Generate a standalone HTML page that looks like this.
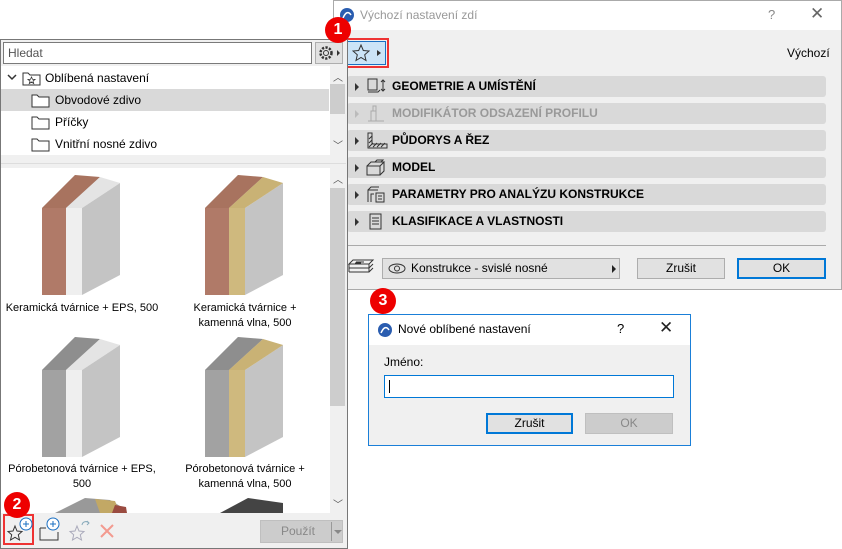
<!DOCTYPE html>
<html><head><meta charset="utf-8"><style>
*{box-sizing:border-box;margin:0;padding:0}
body{width:842px;height:549px;background:#fff;position:relative;overflow:hidden;font-family:"Liberation Sans",sans-serif;font-size:12px;color:#000}
.a{position:absolute}
.sec{position:absolute;left:347px;width:479px;height:21px;background:#d9d9d9;border-radius:3px;font-weight:bold;font-size:12px;line-height:21px}
.sec .t{position:absolute;left:45px}
.sec svg{position:absolute}
.sec .tri{position:absolute;left:8px;top:7px;width:0;height:0;border-left:4px solid #333;border-top:4px solid transparent;border-bottom:4px solid transparent}
.btn{position:absolute;background:#e1e1e1;border:1px solid #adadad;text-align:center;font-size:12px}
.badge{position:absolute;width:26px;height:26px;border-radius:50%;background:#e00;color:#fff;font-weight:bold;font-size:16px;text-align:center;line-height:26px}
.lbl{position:absolute;width:160px;text-align:center;font-size:11px;line-height:15px}
</style></head><body>

<!-- right dialog -->
<div class="a" style="left:333px;top:0;width:509px;height:290px;background:#f0f0f0;border:1px solid #aaa"></div>
<div class="a" style="left:334px;top:1px;width:507px;height:29px;background:#fff"></div>
<svg class="a" style="left:339px;top:7px" width="16" height="16"><circle cx="8" cy="8" r="7" fill="#2a5db0"/><path d="M4 11 Q8 2 12 8" stroke="#fff" stroke-width="1.5" fill="none"/></svg>
<div class="a" style="left:360px;top:8px;color:#999;font-size:12px">Výchozí nastavení zdí</div>
<div class="a" style="left:768px;top:7px;color:#888;font-size:13px">?</div>
<div class="a" style="left:810px;top:4px;color:#666;font-size:17px">✕</div>
<div class="a" style="left:343px;top:38px;width:46px;height:30px;border:2px solid #e33"></div>
<div class="a" style="left:346px;top:41px;width:40px;height:24px;background:#cce4f7;border:1px solid #1a6fc2"></div>
<svg class="a" style="left:352px;top:44px" width="30" height="18"><path d="M9 1 L11.3 6.5 L17 7 L12.7 10.8 L14 16.5 L9 13.5 L4 16.5 L5.3 10.8 L1 7 L6.7 6.5 Z" fill="none" stroke="#333" stroke-width="1"/><path d="M25 6 L29 9 L25 12Z" fill="#333"/></svg>
<div class="a" style="left:787px;top:46px;font-size:12px">Výchozí</div>

<div class="sec" style="top:76px"><i class="tri"></i><svg style="left:20px;top:2px" width="20" height="17"><rect x="1" y="1" width="9" height="11" fill="none" stroke="#333"/><path d="M1 14 L11 14 L13 12" stroke="#333" fill="none"/><path d="M16 2 V13 M14 4 L16 2 L18 4 M14 11 L16 13 L18 11" stroke="#333" fill="none"/></svg><span class="t">GEOMETRIE A UMÍSTĚNÍ</span></div>
<div class="sec" style="top:103px;color:#999"><i class="tri" style="border-left-color:#bbb"></i><svg style="left:19px;top:2px" width="20" height="17"><path d="M2 16 H18 M5 16 V6 H10 V16 M7 6 V1 H10 V6" stroke="#aaa" fill="none"/></svg><span class="t">MODIFIKÁTOR ODSAZENÍ PROFILU</span></div>
<div class="sec" style="top:130px"><i class="tri"></i><svg style="left:19px;top:2px" width="22" height="17"><path d="M2 1 V16 H21 V12 H6 V1 Z" fill="none" stroke="#333"/><path d="M3 15 L7 11 M7 15 L11 11 M11 15 L15 11 M15 15 L19 11 M3 11 L6 8 M3 7 L6 4" stroke="#333"/></svg><span class="t">PŮDORYS A ŘEZ</span></div>
<div class="sec" style="top:157px"><i class="tri"></i><svg style="left:19px;top:2px" width="22" height="17"><path d="M1 7 H14 V16 H1 Z M1 7 L5 3 H18 L14 7 M18 3 V12 L14 16 M9 3 L11 1 H17 L15 3" fill="none" stroke="#333"/></svg><span class="t">MODEL</span></div>
<div class="sec" style="top:184px"><i class="tri"></i><svg style="left:19px;top:2px" width="22" height="17"><path d="M2 16 V4 H12 M5 16 V8 H8 M2 4 L5 1 H13" fill="none" stroke="#333"/><rect x="10" y="7" width="8" height="9" fill="none" stroke="#333"/><path d="M12 10 H16 M12 13 H16" stroke="#333"/></svg><span class="t">PARAMETRY PRO ANALÝZU KONSTRUKCE</span></div>
<div class="sec" style="top:211px"><i class="tri"></i><svg style="left:21px;top:2px" width="16" height="17"><rect x="2" y="1" width="11" height="15" fill="none" stroke="#333"/><path d="M4 5 H11 M4 8 H11 M4 11 H11" stroke="#333"/></svg><span class="t">KLASIFIKACE A VLASTNOSTI</span></div>
<div class="a" style="left:347px;top:245px;width:479px;height:1px;background:#aaa"></div>
<svg class="a" style="left:347px;top:258px" width="28" height="22"><path d="M2 6 H22 L26 2 H6 Z M2 10 H22 L26 6 M2 14 H22 L26 10 M2 6 V14 M22 6 V14" fill="none" stroke="#333"/><path d="M9 4 H17 M8 5 H14" stroke="#333"/></svg>
<div class="btn" style="left:382px;top:258px;width:238px;height:21px;text-align:left;padding-left:28px;line-height:19px">Konstrukce - svislé nosné</div>
<svg class="a" style="left:388px;top:263px" width="18" height="11"><ellipse cx="9" cy="5.5" rx="8" ry="4.5" fill="none" stroke="#333"/><circle cx="9" cy="5.5" r="2.5" fill="none" stroke="#333"/></svg>
<div class="a" style="left:612px;top:265px;border-left:4px solid #222;border-top:4px solid transparent;border-bottom:4px solid transparent"></div>
<div class="btn" style="left:637px;top:258px;width:88px;height:21px;line-height:19px">Zrušit</div>
<div class="btn" style="left:737px;top:258px;width:89px;height:21px;line-height:17px;border:2px solid #0078d7">OK</div>

<!-- left panel -->
<div class="a" style="left:0;top:39px;width:348px;height:510px;background:#f0f0f0;border:1px solid #777"></div>
<div class="a" style="left:3px;top:42px;width:309px;height:22px;background:#fff;border:1px solid #7a7a7a;padding:3px 0 0 4px;color:#555">Hledat</div>
<div class="a" style="left:315px;top:42px;width:28px;height:22px;background:#e1e1e1;border:1px solid #adadad"></div>
<svg class="a" style="left:317px;top:44px" width="26" height="18"><circle cx="9" cy="9" r="5.5" fill="none" stroke="#333" stroke-dasharray="2.2 1.4" stroke-width="2.5"/><circle cx="9" cy="9" r="2.5" fill="none" stroke="#333"/><path d="M20 6 L23 9 L20 12Z" fill="#333"/></svg>
<div class="a" style="left:1px;top:66px;width:329px;height:89px;background:#fff"></div>
<div class="a" style="left:1px;top:89px;width:328px;height:22px;background:#d9d9d9"></div>
<div class="a" style="left:330px;top:66px;width:16px;height:89px;background:#f0f0f0"></div>
<div class="a" style="left:330px;top:84px;width:15px;height:30px;background:#cdcdcd"></div>
<div class="a" style="left:333px;top:69px;font-size:10px;color:#555">︿</div>
<div class="a" style="left:333px;top:137px;font-size:10px;color:#555">﹀</div>
<svg class="a" style="left:6px;top:70px" width="40" height="16"><path d="M2 5 L6 9 L10 5" stroke="#333" stroke-width="1.5" fill="none"/><path d="M17 3 H22 L24 5 H34 V15 H17 Z" fill="#fff" stroke="#333"/><path d="M25.5 7 L26.5 9.3 L29 9.5 L27 11 L27.7 13.5 L25.5 12 L23.3 13.5 L24 11 L22 9.5 L24.5 9.3Z" fill="none" stroke="#333" stroke-width=".8"/></svg>
<div class="a" style="left:45px;top:71px">Oblíbená nastavení</div>
<svg class="a" style="left:31px;top:92px" width="20" height="60"><path d="M1 3 H6 L8 5 H18 V15 H1 Z M1 25 H6 L8 27 H18 V37 H1 Z M1 47 H6 L8 49 H18 V59 H1 Z" fill="#fff" stroke="#333"/></svg>
<div class="a" style="left:55px;top:93px">Obvodové zdivo</div>
<div class="a" style="left:55px;top:115px">Příčky</div>
<div class="a" style="left:55px;top:137px">Vnitřní nosné zdivo</div>
<div class="a" style="left:1px;top:163px;width:345px;height:1px;background:#ddd"></div>
<div class="a" style="left:1px;top:168px;width:329px;height:345px;background:#fff"></div>
<div class="a" style="left:330px;top:168px;width:16px;height:345px;background:#f0f0f0"></div>
<div class="a" style="left:330px;top:188px;width:15px;height:218px;background:#cdcdcd"></div>
<div class="a" style="left:333px;top:171px;font-size:10px;color:#555">︿</div>
<div class="a" style="left:333px;top:496px;font-size:10px;color:#555">﹀</div>

<svg class="a" style="left:0;top:168px" width="330" height="345">
<defs>
<g id="bk"><polygon points="40,40 78,15 78,107 40,127" fill="#c4c4c4"/><polygon points="0,40 33,7 78,15 40,40" fill="#d5d5d5"/></g>
</defs>
<g transform="translate(42,0)"><use href="#bk"/><polygon points="0,40 33,7 58,9 24,40" fill="#a8735f"/><polygon points="24,40 58,9 78,15 40,40" fill="#e4e4e4"/><rect x="0" y="40" width="24" height="87" fill="#b07a68"/><rect x="24" y="40" width="16" height="87" fill="#efefef"/></g>
<g transform="translate(205,0)"><use href="#bk"/><polygon points="0,40 33,7 58,9 24,40" fill="#a8735f"/><polygon points="24,40 58,9 78,15 40,40" fill="#c9b275"/><rect x="0" y="40" width="24" height="87" fill="#b07a68"/><rect x="24" y="40" width="16" height="87" fill="#cfb97e"/></g>
<g transform="translate(42,162)"><use href="#bk"/><polygon points="0,40 33,7 58,9 24,40" fill="#8e8e8e"/><polygon points="24,40 58,9 78,15 40,40" fill="#e4e4e4"/><rect x="0" y="40" width="24" height="87" fill="#a2a2a2"/><rect x="24" y="40" width="16" height="87" fill="#efefef"/></g>
<g transform="translate(205,162)"><use href="#bk"/><polygon points="0,40 33,7 58,9 24,40" fill="#8e8e8e"/><polygon points="24,40 58,9 78,15 40,40" fill="#c9b275"/><rect x="0" y="40" width="24" height="87" fill="#a2a2a2"/><rect x="24" y="40" width="16" height="87" fill="#cfb97e"/></g>
<polygon points="55,345 85,330 110,332 120,338 125,345" fill="#999"/><polygon points="95,331 115,333 120,345 100,345" fill="#c2a865"/><polygon points="112,345 115,337 126,339 127,345" fill="#9a4b40"/>
<polygon points="220,345 248,330 283,335 283,345" fill="#444"/>
</svg>
<div class="lbl" style="left:2px;top:301px">Keramická tvárnice + EPS, 500</div>
<div class="lbl" style="left:165px;top:301px">Keramická tvárnice +<br>kamenná vlna, 500</div>
<div class="lbl" style="left:2px;top:462px">Pórobetonová tvárnice + EPS,<br>500</div>
<div class="lbl" style="left:165px;top:462px">Pórobetonová tvárnice +<br>kamenná vlna, 500</div>

<div class="a" style="left:3px;top:514px;width:31px;height:31px;border:2px solid #e33"></div>
<svg class="a" style="left:6px;top:516px" width="130" height="28"><path d="M9 10 L11 15 L16 15.5 L12.3 18.8 L13.5 24 L9 21.3 L4.5 24 L5.7 18.8 L2 15.5 L7 15Z" fill="none" stroke="#333"/><circle cx="20" cy="8" r="6" fill="#fff" stroke="#1a6fc2"/><path d="M20 5 V11 M17 8 H23" stroke="#1a6fc2"/>
<path d="M34 12 V24 H52 V16" fill="none" stroke="#333"/><path d="M34 12 H40" stroke="#333"/><circle cx="47" cy="8" r="6" fill="#fff" stroke="#1a6fc2"/><path d="M47 5 V11 M44 8 H50" stroke="#1a6fc2"/>
<path d="M71 10 L73 15 L78 15.5 L74.3 18.8 L75.5 24 L71 21.3 L66.5 24 L67.7 18.8 L64 15.5 L69 15Z" fill="none" stroke="#aab"/><path d="M76 9 A4 4 0 0 1 83 7 M81 5 L83 7 L81 9" fill="none" stroke="#8ab"/>
<path d="M95 9 L107 21 M107 9 L95 21" stroke="#f39a8f" stroke-width="2"/></svg>
<div class="a" style="left:260px;top:520px;width:83px;height:23px;background:#ccc;border:1px solid #bfbfbf;color:#888;line-height:21px;padding-left:20px">Použít</div>
<div class="a" style="left:331px;top:522px;width:1px;height:19px;background:#999"></div>
<div class="a" style="left:334px;top:530px;border-top:4px solid #888;border-left:4px solid transparent;border-right:4px solid transparent"></div>

<div class="a" style="left:368px;top:314px;width:323px;height:132px;background:#f0f0f0;border:1px solid #1a7fd8"></div>
<div class="a" style="left:369px;top:315px;width:321px;height:30px;background:#fff"></div>
<svg class="a" style="left:377px;top:322px" width="16" height="16"><circle cx="8" cy="8" r="7" fill="#2a5db0"/><path d="M4 11 Q8 2 12 8" stroke="#fff" stroke-width="1.5" fill="none"/></svg>
<div class="a" style="left:398px;top:322px;font-size:12px">Nové oblíbené nastavení</div>
<div class="a" style="left:617px;top:321px;font-size:13px">?</div>
<div class="a" style="left:659px;top:318px;font-size:17px;color:#222">✕</div>
<div class="a" style="left:384px;top:355px">Jméno:</div>
<div class="a" style="left:384px;top:375px;width:290px;height:23px;background:#fff;border:1px solid #0078d7"></div>
<div class="a" style="left:389px;top:380px;width:1px;height:13px;background:#000"></div>
<div class="btn" style="left:486px;top:413px;width:87px;height:21px;line-height:17px;border:2px solid #0078d7">Zrušit</div>
<div class="btn" style="left:585px;top:413px;width:88px;height:21px;line-height:19px;background:#ccc;border-color:#bfbfbf;color:#888">OK</div>

<div class="badge" style="left:325px;top:17px">1</div>
<div class="badge" style="left:4px;top:492px">2</div>
<div class="badge" style="left:370px;top:288px">3</div>
</body></html>
